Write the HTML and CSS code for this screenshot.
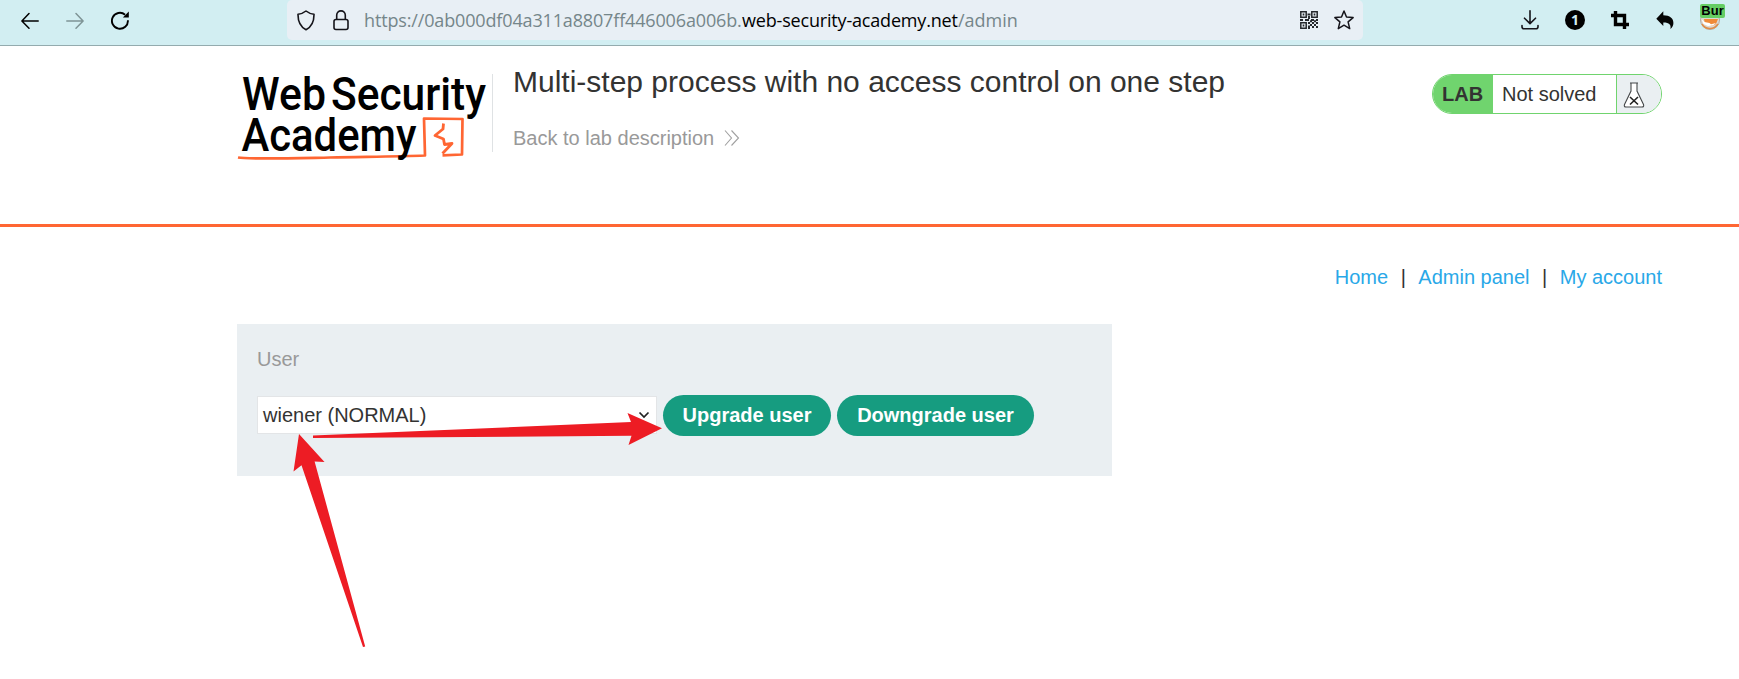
FILE: index.html
```html
<!DOCTYPE html>
<html lang="en">
<head>
<meta charset="utf-8">
<title>Multi-step process with no access control on one step</title>
<link rel="stylesheet" href="styles.css">
</head>
<body>
<header class="browser-bar">
  <div class="nav-icons">
    <svg width="18" height="18" viewBox="0 0 18 18" fill="none" stroke="#000" stroke-width="1.5" stroke-linecap="round" stroke-linejoin="round"><path d="M17.2 9H1M8 1.500L.9 9 8 16.200"/></svg>
    <svg width="18" height="18" viewBox="0 0 18 18" fill="none" stroke="#7f9496" stroke-width="1.500" stroke-linecap="round" stroke-linejoin="round"><path d="M.8 9H17M10 1.500L17.100 9 10 16.200"/></svg>
    <svg width="18" height="19" viewBox="0 0 18 19" fill="none" stroke="#000" stroke-width="1.900"><path d="M16.900 9.200A8 8 0 1 1 14.100 3.700"/><path d="M17.800 .4V6.500H11.900Z" fill="#000" stroke="none"/></svg>
  </div>
  <div class="url-box">
    <svg width="18" height="21" viewBox="0 0 18 21" fill="none" stroke="#15141a" stroke-width="1.600" stroke-linejoin="round"><path d="M9 1C11.500 3 14 3.900 17 4.300 17.100 11.200 14.600 16.800 9 19.800 3.400 16.800 .9 11.200 1 4.300 4 3.900 6.500 3 9 1Z"/></svg>
    <svg class="lock" width="16" height="21" viewBox="0 0 16 21" fill="none" stroke="#15141a" stroke-width="1.600"><rect x="1" y="9.500" width="14" height="10" rx="2"/><path d="M3.700 9.500V5.200a4.300 4.300 0 0 1 8.600 0V9.500"/></svg>
    <div class="url"><span class="url-host">https://0ab000df04a311a8807ff446006a006b.</span><span class="url-domain">web-security-academy.net</span><span class="url-path">/admin</span></div>
    <svg class="qr" width="18" height="18" viewBox="0 0 18 18" fill="none" stroke="#25282c" stroke-width="1.500"><path d="M.8 .8h5.400v5.400H.8ZM11.800 .8h5.400v5.400h-5.400ZM.8 11.800h5.400v5.400H.8Z"/><path d="M2.700 3.500h1.600M13.700 3.500h1.600M2.700 14.500h1.600M7.500 3.500h3M9 5v3M0 9h3M5 9h4M11 9h3M16 9h2M8 12h2M10 10.300h2M12 12h2M14 10.300h2M16 12h2M10 14h2M14 14h2M8 15.500h2M12 16h2M16 16h2M8 17.500h2" stroke-width="1.900"/></svg>
    <svg width="20" height="20" viewBox="0 0 20 20" fill="none" stroke="#15141a" stroke-width="1.500" stroke-linejoin="round"><path d="M10 1l2.500 6 6.600.6-5 4.300 1.600 6.700L10 15.200 4.300 18.600l1.600-6.700-5-4.300L7.500 7Z"/></svg>
  </div>
  <div class="tool-icons">
    <svg width="18" height="20" viewBox="0 0 18 20" fill="none" stroke="#15141a" stroke-width="1.600" stroke-linecap="round" stroke-linejoin="round"><path d="M9 .8V13.500M3.500 8.200L9 13.600l5.500-5.400M1 15.500v1.300a2 2 0 0 0 2 2h12a2 2 0 0 0 2-2v-1.300"/></svg>
    <span class="count">1</span>
    <svg width="18" height="18" viewBox="0 0 18 18" fill="none" stroke="#000" stroke-width="3.400"><path d="M4.500 0v13.500H18M0 4.500h13.500V18"/></svg>
    <svg width="18" height="18" viewBox="0 0 18 18"><path d="M7.300 .3V4.300C14 4.300 17.400 7.500 17.400 12c0 2.500-1 4.300-3 5.900 1-4.300-1.300-6.600-7.100-6.500V15L.3 7.700Z" fill="#050505"/></svg>
    <span class="fox">
      <svg width="20" height="20" viewBox="0 0 20 20"><circle cx="10" cy="10" r="9.500" fill="#ddd8d2" stroke="#b2aaa4"/><path d="M4 9h14l-2 5-4 2-7-2Z" fill="#f08a38"/><path d="M1.500 9l3 3 5 1 1.500 1.300 5-1.300-3 2.500-5 .5-4.500-2Z" fill="#fff"/><path d="M2 14c3 5 11 7 16 0" fill="none" stroke="#e08d48" stroke-width="1.500"/></svg>
      <b class="fox-badge">Bur</b>
    </span>
  </div>
</header>

<section class="lab-header">
  <svg class="logo" width="256" height="100" viewBox="237 65 256 100">
    <path d="M238 157.500C248 159.500 290 158.300 330 157.500S400 156.500 425 155.500L424 118.500 462.500 119 462 154.500 442.500 155.300" fill="none" stroke="#ff6633" stroke-width="2.700" stroke-linejoin="round"/>
    <path d="M443.500 123.500L443 129 435 135.500 443.500 139 444.500 144.500 452 143.500 442.500 153.500" fill="none" stroke="#ff6633" stroke-width="2.800" stroke-linejoin="round"/>
    <g class="logo-text">
      <text x="242" y="110" textLength="84" lengthAdjust="spacingAndGlyphs">Web</text>
      <text x="331" y="110" textLength="155" lengthAdjust="spacingAndGlyphs">Security</text>
      <text x="241.500" y="151" textLength="175" lengthAdjust="spacingAndGlyphs">Academy</text>
    </g>
    <path d="M492.500 74V152" stroke="#dfe2e4"/>
  </svg>
  <div class="title-block">
    <h2>Multi-step process with no access control on one step</h2>
    <a class="back">Back to lab description
      <svg width="16" height="16" viewBox="0 0 16 16" fill="none" stroke="#a0a0a0" stroke-width="1.100"><path d="M1 .5l6.500 7.500L1 15.500M7.500 .5L14.500 8l-7 7.500"/></svg>
    </a>
  </div>
  <div class="status">
    <span class="lab">LAB</span>
    <span class="state">Not solved</span>
    <span class="flask"><svg width="22" height="26" viewBox="0 0 22 26" fill="#fff" stroke="#45484a" stroke-width="1.100"><path d="M7 1h8M8 1v8L1.500 22.500Q.7 25 3 25H19Q21.300 25 20.500 22.500L14 9V1"/><path d="M7 15l8 7.500M15 15l-8 7.500" stroke="#222" stroke-width="1.600"/></svg></span>
  </div>
</section>

<main class="content">
  <nav class="links"><a>Home</a><i>|</i><a>Admin panel</a><i>|</i><a>My account</a></nav>
  <form class="panel">
    <label>User</label>
    <div class="controls">
      <div class="select"><span>wiener (NORMAL)</span><svg width="12" height="8" viewBox="0 0 12 8" fill="none" stroke="#222" stroke-width="1.700"><path d="M1.500 1.500L6 6l4.500-4.500"/></svg></div>
      <button type="button" class="upgrade">Upgrade user</button>
      <button type="button" class="downgrade">Downgrade user</button>
    </div>
  </form>
</main>

<svg class="arrows" width="1739" height="679" viewBox="0 0 1739 679" fill="#ed1c24">
  <path d="M313 435.600L631 422 627.500 413 662 428.300 628.500 445 631.500 435.800 313 438Z"/>
  <path d="M299 434L324.500 462 314.600 461.500 365.200 646.500 363 647 301.500 465.300 293.500 471.500Z"/>
</svg>
</body>
</html>
```

FILE: styles.css
```css
* { box-sizing: border-box; }
body {
  margin: 0;
  width: 1739px;
  height: 679px;
  overflow: hidden;
  background: #fff;
  color: #333332;
  font: 20px/24px "Liberation Sans", Arial, sans-serif;
}
svg { display: block; flex: none; }

.browser-bar {
  display: flex;
  height: 46px;
  background: #d2eef2;
  border-bottom: 1px solid #94abae;
}
.nav-icons {
  display: flex;
  align-items: center;
  gap: 27px;
  width: 287px;
  height: 41px;
  padding-left: 21px;
}
.url-box {
  display: flex;
  align-items: center;
  width: 1076px;
  height: 40px;
  padding: 0 9px 0 10px;
  background: #e8eff5;
  border-radius: 5px;
}
.lock { margin-left: 18px; }
.url {
  flex: 1;
  display: flex;
  margin-left: 15px;
  color: #75868a;
  font: 18px/24px "Open Sans", "Noto Sans", sans-serif;
  white-space: nowrap;
}
.url-host { width: 378px; letter-spacing: -0.15px; }
.url-domain { width: 216px; color: #000; letter-spacing: -0.18px; }
.qr { margin-right: 16px; }
.tool-icons {
  display: flex;
  align-items: center;
  height: 40px;
  padding-left: 158px;
}
.count {
  width: 20px;
  height: 20px;
  margin: 0 26px 0 26px;
  border-radius: 50%;
  background: #000;
  color: #d2eef2;
  font: bold 14px/20px "Open Sans", sans-serif;
  text-align: center;
}
.tool-icons > svg:nth-of-type(3) { margin-left: 27px; }
.fox { position: relative; width: 26px; height: 20px; margin-left: 26px; }
.fox-badge {
  position: absolute;
  left: 0;
  top: -6px;
  width: 25px;
  height: 14px;
  border-radius: 2px;
  background: #66cd64;
  color: #000;
  font: bold 13px/13px "Liberation Sans", sans-serif;
  text-align: center;
}

.lab-header {
  display: flex;
  height: 181px;
  padding: 19px 0 0 237px;
  border-bottom: 3px solid #ff6633;
}
.logo { overflow: visible; }
.logo-text {
  font: 500 47px Roboto, sans-serif;
  fill: #000;
}
.title-block { width: 919px; padding-left: 20px; }
h2 {
  margin: 0;
  font-size: 30px;
  font-weight: 400;
  line-height: 34px;
  white-space: nowrap;
}
.back {
  display: flex;
  align-items: center;
  gap: 10px;
  margin-top: 27px;
  color: #999;
}
.status {
  display: flex;
  width: 230px;
  height: 40px;
  margin: 9px 0 0 20px;
  border: 1px solid #70d46e;
  border-radius: 20px;
  overflow: hidden;
  line-height: 38px;
}
.lab { width: 60px; padding-left: 9px; background: #70d46e; font-weight: 700; }
.state { width: 124px; padding-left: 9px; border-right: 1px solid #70d46e; }
.flask { flex: 1; padding: 7px 0 0 6px; background: #eaeff2; }

.content { padding: 38px 77px 0 237px; }
.links {
  display: flex;
  justify-content: flex-end;
  color: #29a8e8;
  line-height: 24px;
}
.links i { margin: 0 12.5px; color: #333332; font-style: normal; }
.panel {
  width: 875px;
  height: 152px;
  margin-top: 35px;
  padding: 23px 20px 0;
  background: #eaeff2;
}
.panel label { display: block; color: #999; }
.controls { display: flex; align-items: flex-start; margin-top: 24px; }
.select {
  display: flex;
  align-items: center;
  justify-content: space-between;
  width: 400px;
  height: 38px;
  margin: 1px 6px 0 0;
  padding: 0 6px 0 5px;
  border: 1px solid #e3e5e7;
  background: #fff;
}
button {
  height: 41px;
  padding: 0;
  border: 0;
  border-radius: 20.5px;
  background: #169c80;
  color: #fff;
  font: bold 20px/39px "Liberation Sans", Arial, sans-serif;
  white-space: nowrap;
}
.upgrade { width: 168px; margin-right: 6px; }
.downgrade { width: 197px; }

.arrows { position: absolute; left: 0; top: 0; pointer-events: none; }
```
